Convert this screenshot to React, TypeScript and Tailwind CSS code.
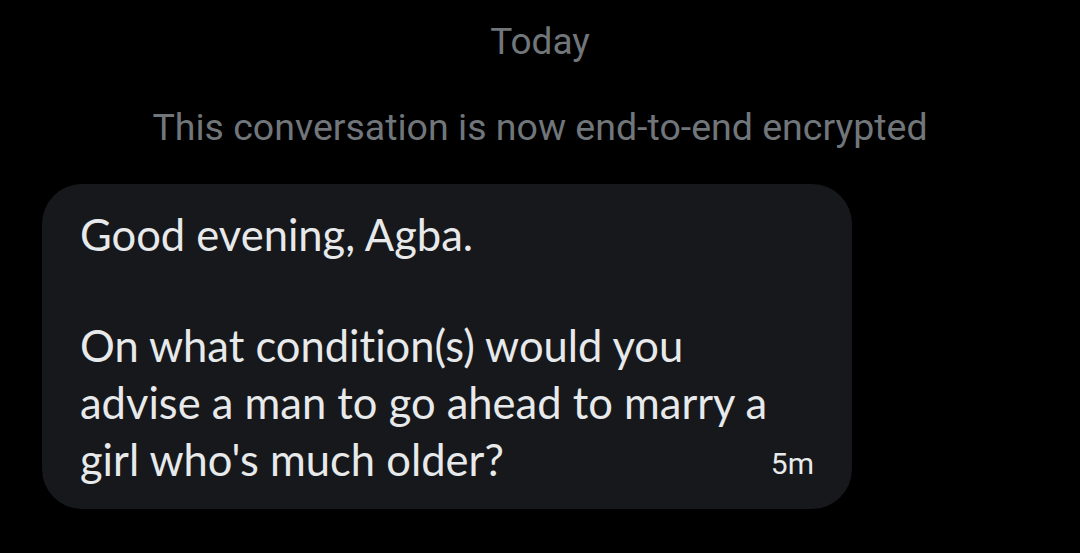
import React from 'react';

const lines = ['On what condition(s) would you', 'advise a man to go ahead to marry a'];

export default function App() {
  return (
    <div className="w-[1080px] h-[553px] bg-black overflow-hidden" style={{ fontFamily: 'Roboto, "Liberation Sans", sans-serif' }}>
      <div className="h-[84px] flex items-center justify-center">
        <span className="text-[37px] text-[#71767b]">Today</span>
      </div>
      <div className="h-[86px] flex items-center justify-center">
        <span className="text-[37.5px] text-[#71767b]">This conversation is now end-to-end encrypted</span>
      </div>
      <div className="pl-[42px] pt-[14px]">
        <div
          className="w-[810px] rounded-[40px] bg-[#16181c] pl-[38px] pr-[38px] pt-[21.5px] pb-[21.5px] text-[#e7e9ea] text-[43.5px] leading-[57px] [font-variant-ligatures:none]"
          style={{ fontFamily: 'Lato, "Open Sans", sans-serif' }}
        >
          <div>Good evening, Agba.</div>
          <div className="h-[54px]" />
          {lines.map((l) => (
            <div key={l}>{l}</div>
          ))}
          <div className="flex h-[57px] items-center justify-between">
            <span>girl who's much older?</span>
            <span className="text-[30px] leading-none pt-[10px]" style={{ fontFamily: 'Roboto, sans-serif' }}>5m</span>
          </div>
        </div>
      </div>
    </div>
  );
}
